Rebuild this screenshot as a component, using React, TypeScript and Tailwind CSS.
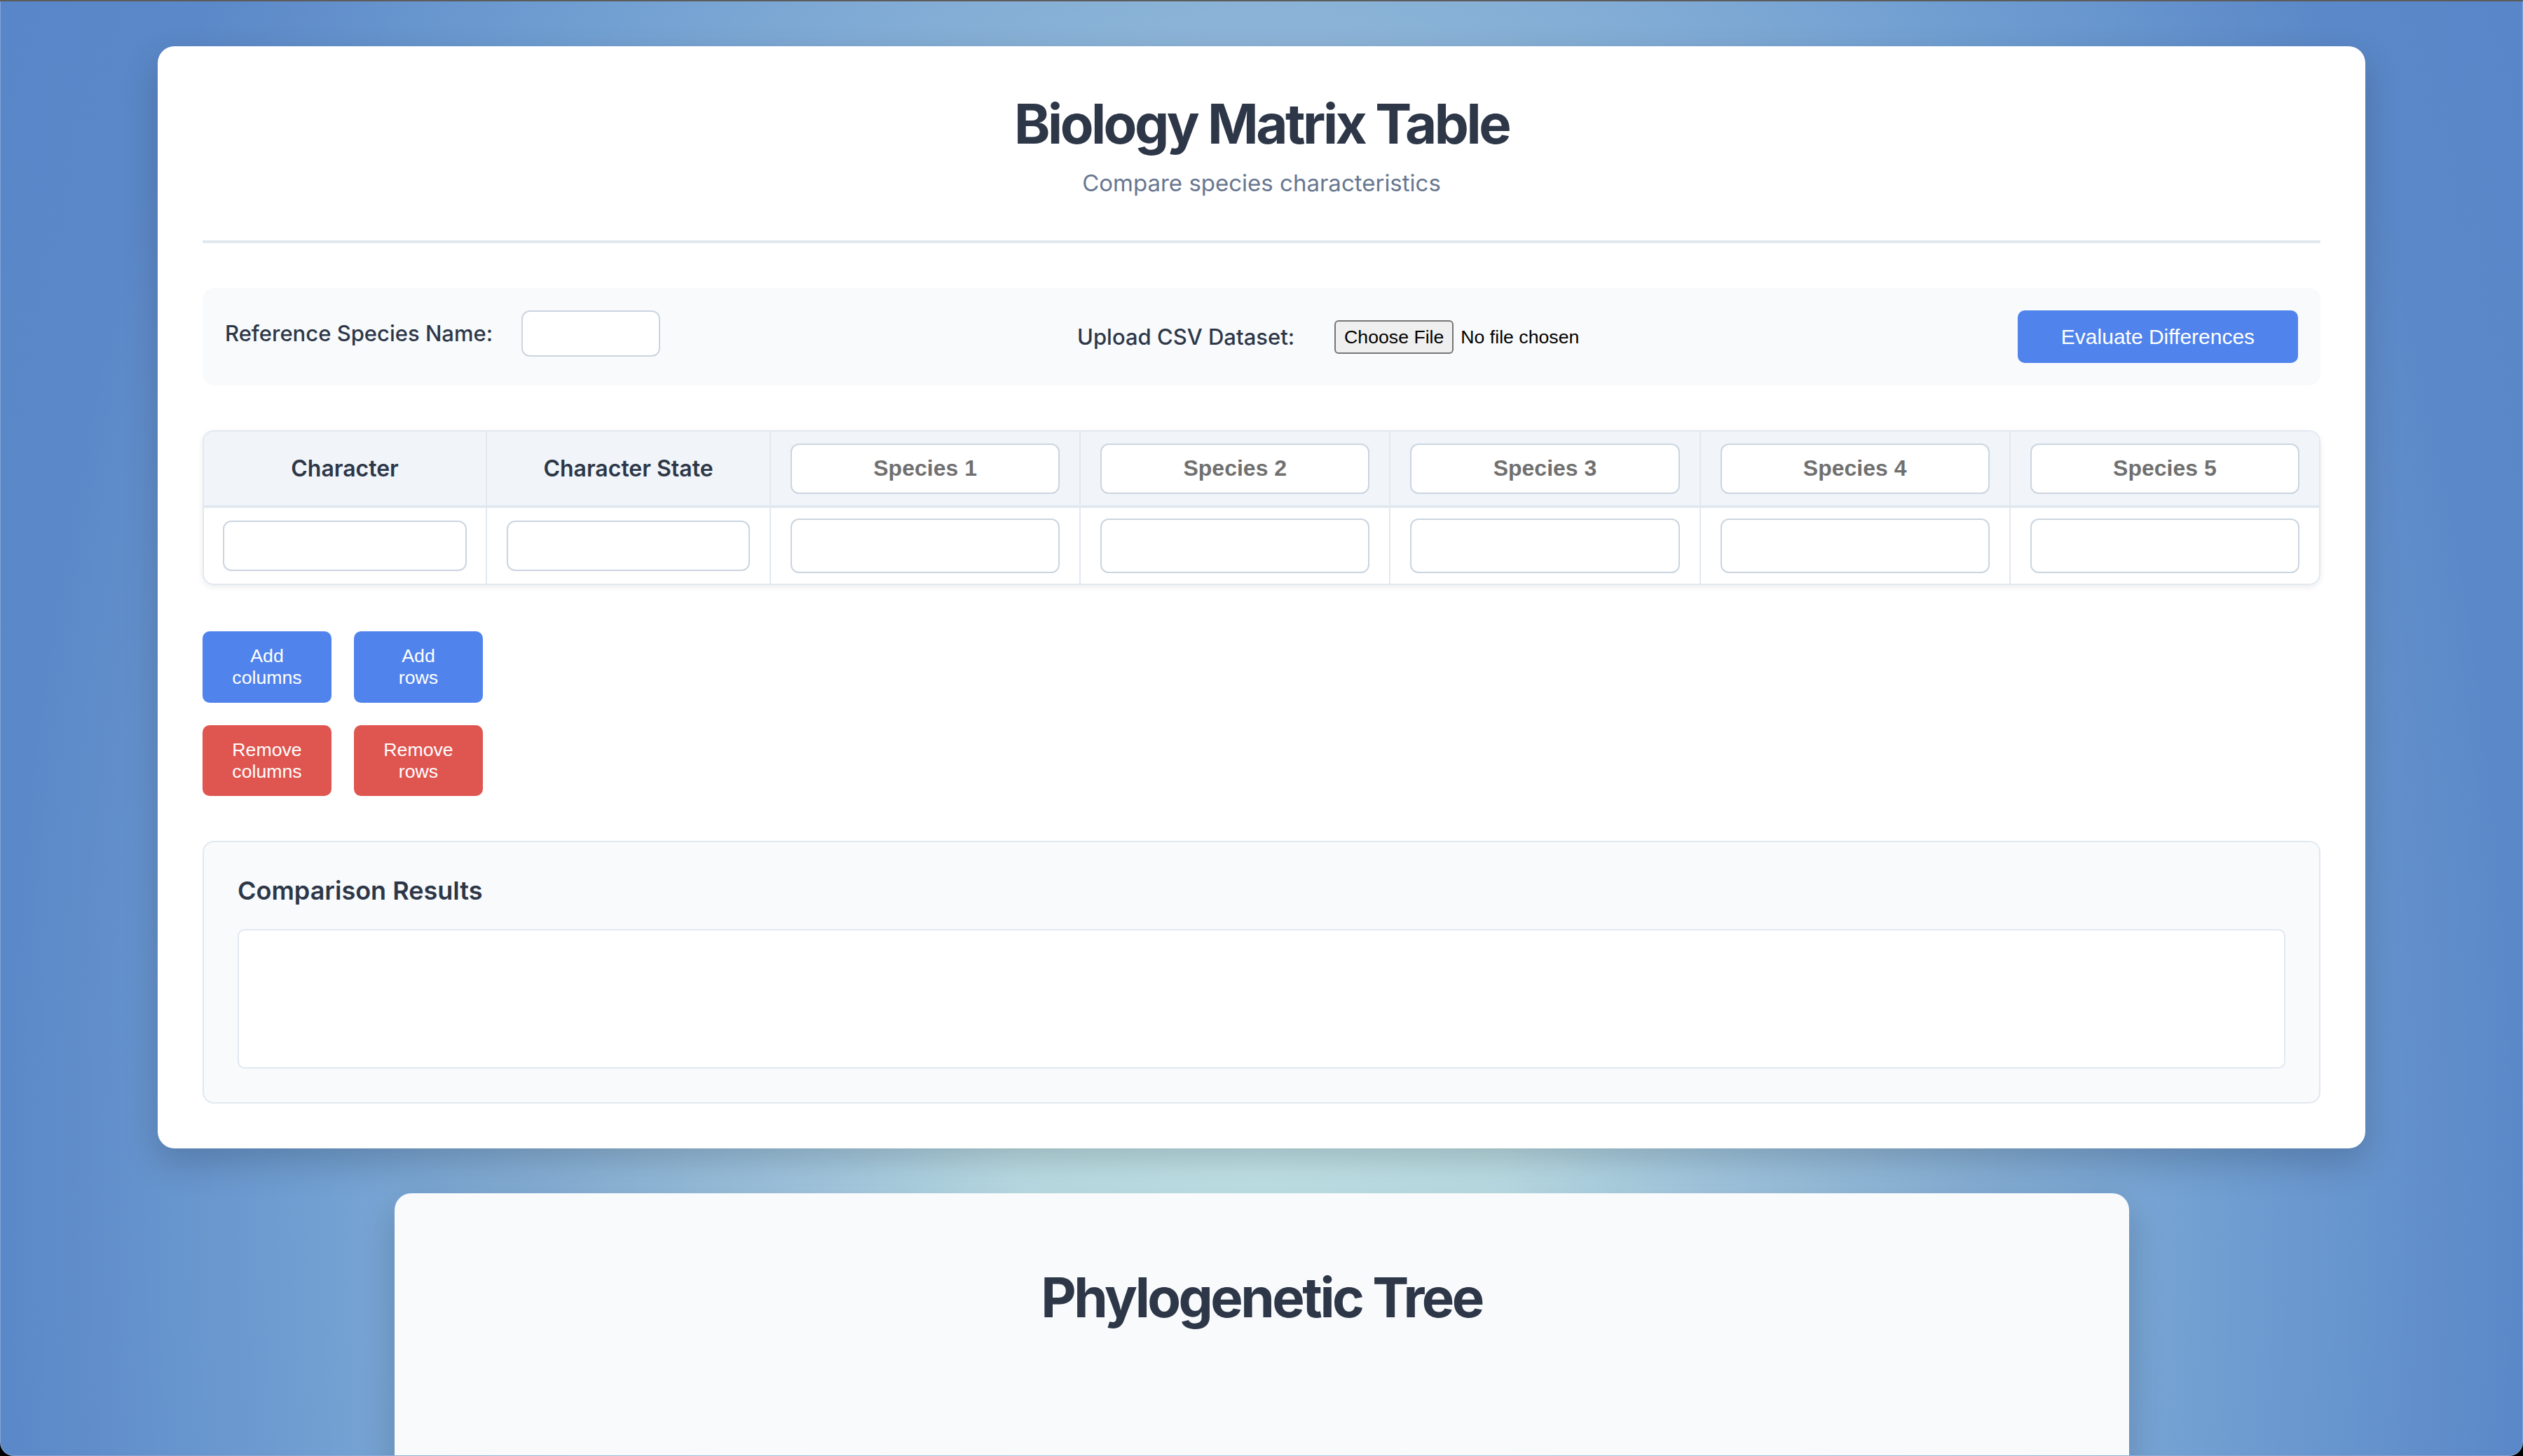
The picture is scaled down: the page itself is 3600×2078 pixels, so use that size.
import React from 'react';

const speciesCols = [1, 2, 3, 4, 5];

const App = () => {
    return (
        <div className="h-[2078px] overflow-hidden bg-black font-[family-name:Inter,sans-serif]">
            <div className="h-[2px] bg-[#5c5c5c]" />
            <div className="flex h-[2076px] flex-col items-center overflow-hidden rounded-b-[20px] border-x border-b border-white/25 bg-[radial-gradient(ellipse_2300px_4000px_at_50%_1698px,#c0e3e8_0%,#bbdde5_15%,#a3c8e0_27%,#87b0d6_44%,#72a0d2_58%,#5b88c8_78%,#5584c8_100%)] pt-[64px]">

                {/* matrix card */}
                <div className="w-[3150px] shrink-0 rounded-[24px] bg-white p-[64px] shadow-[0_20px_50px_rgba(0,0,0,0.18)]">
                    <header className="border-b-4 border-[#e2e8f0] pb-[58px] text-center">
                        <h1 className="text-[78px] leading-[1.2] font-bold tracking-[-0.045em] text-[#2d3748]">
                            Biology Matrix Table
                        </h1>
                        <p className="mt-[14px] text-[33px] leading-[1.45] text-[#687790]">
                            Compare species characteristics
                        </p>
                    </header>

                    <div className="mt-[64px] flex items-start justify-between rounded-[16px] bg-[#f8fafc] p-[32px]">
                        <div className="flex items-center">
                            <label className="mr-[41px] text-[31px] font-medium text-[#2d3748]">
                                Reference Species Name:
                            </label>
                            <input
                                type="text"
                                className="h-[66px] w-[198px] rounded-[12px] border-2 border-[#cbd5e0] bg-white"
                            />
                        </div>
                        <div className="flex h-[75px] items-center">
                            <label className="mr-[57px] text-[31px] font-medium text-[#2d3748]">
                                Upload CSV Dataset:
                            </label>
                            <input
                                type="file"
                                accept=".csv"
                                className="w-[380px] font-[family-name:'Liberation_Sans',Arial,sans-serif] text-[26.67px] text-black file:mr-[10px] file:rounded-[6px] file:border-2 file:border-[#767676] file:bg-[#efefef] file:px-[12px] file:py-[2px]"
                            />
                        </div>
                        <button className="h-[75px] w-[400px] rounded-[10px] bg-[#5083ec] font-[family-name:'Liberation_Sans',Arial,sans-serif] text-[30px] text-white">
                            Evaluate Differences
                        </button>
                    </div>

                    <div className="mt-[64px] overflow-hidden rounded-[16px] border-2 border-[#e2e8f0] shadow-[0_3px_8px_rgba(0,0,0,0.08)]">
                        <div className="grid grid-cols-[402px_405px_repeat(5,1fr)]">
                            <div className="flex h-[109px] items-center justify-center border-b-4 border-[#e2e8f0] bg-[#f1f5f9] text-[32px] font-semibold text-[#2d3748]">
                                Character
                            </div>
                            <div className="flex h-[109px] items-center justify-center border-b-4 border-l-2 border-[#e2e8f0] bg-[#f1f5f9] text-[32px] font-semibold text-[#2d3748]">
                                Character State
                            </div>
                            {speciesCols.map((n) => (
                                <div
                                    key={'h' + n}
                                    className="flex h-[109px] items-center border-b-4 border-l-2 border-[#e2e8f0] bg-[#f1f5f9] px-[28px]"
                                >
                                    <input
                                        type="text"
                                        placeholder={`Species ${n}`}
                                        className="h-[72px] w-full rounded-[12px] border-2 border-[#cbd5e0] bg-white text-center font-[family-name:'Liberation_Sans',Arial,sans-serif] text-[32px] font-bold placeholder:text-[#707070]"
                                    />
                                </div>
                            ))}

                            <div className="flex h-[108px] items-center px-[27px]">
                                <input
                                    type="text"
                                    className="h-[72px] w-full rounded-[12px] border-2 border-[#cbd5e0] bg-white"
                                />
                            </div>
                            <div className="flex h-[108px] items-center border-l-2 border-[#e2e8f0] px-[28px]">
                                <input
                                    type="text"
                                    className="h-[72px] w-full rounded-[12px] border-2 border-[#cbd5e0] bg-white"
                                />
                            </div>
                            {speciesCols.map((n) => (
                                <div
                                    key={'b' + n}
                                    className="flex h-[108px] items-center border-l-2 border-[#e2e8f0] px-[28px]"
                                >
                                    <input
                                        type="text"
                                        className="h-[78px] w-full rounded-[12px] border-2 border-[#cbd5e0] bg-white"
                                    />
                                </div>
                            ))}
                        </div>
                    </div>

                    <div className="mt-[66px] grid w-fit grid-cols-[184px_184px] gap-[32px] font-[family-name:'Liberation_Sans',Arial,sans-serif] text-[26.67px] leading-[30.7px] text-white">
                        <button className="rounded-[10px] bg-[#5083ec] px-[40px] py-[20px]">Add columns</button>
                        <button className="rounded-[10px] bg-[#5083ec] px-[40px] py-[20px]">Add rows</button>
                        <button className="rounded-[10px] bg-[#df5550] px-[40px] py-[20px]">Remove columns</button>
                        <button className="rounded-[10px] bg-[#df5550] px-[40px] py-[20px]">Remove rows</button>
                    </div>

                    <div className="mt-[64px] rounded-[16px] border-2 border-[#e2e8f0] bg-[#f8fafc] p-[48px]">
                        <h2 className="text-[36px] leading-[1.21] font-semibold text-[#2d3748]">
                            Comparison Results
                        </h2>
                        <div className="mt-[32px] h-[199px] rounded-[10px] border-2 border-[#e2e8f0] bg-white" />
                    </div>
                </div>

                {/* tree card */}
                <div className="mt-[64px] h-[600px] w-[2475px] shrink-0 rounded-[24px] bg-[#f8fafc] pt-[102px] shadow-[0_20px_50px_rgba(0,0,0,0.18)]">
                    <h2 className="text-center text-[78px] leading-[1.2] font-bold tracking-[-0.045em] text-[#2d3748]">
                        Phylogenetic Tree
                    </h2>
                </div>
            </div>
        </div>
    );
};

export default App;
